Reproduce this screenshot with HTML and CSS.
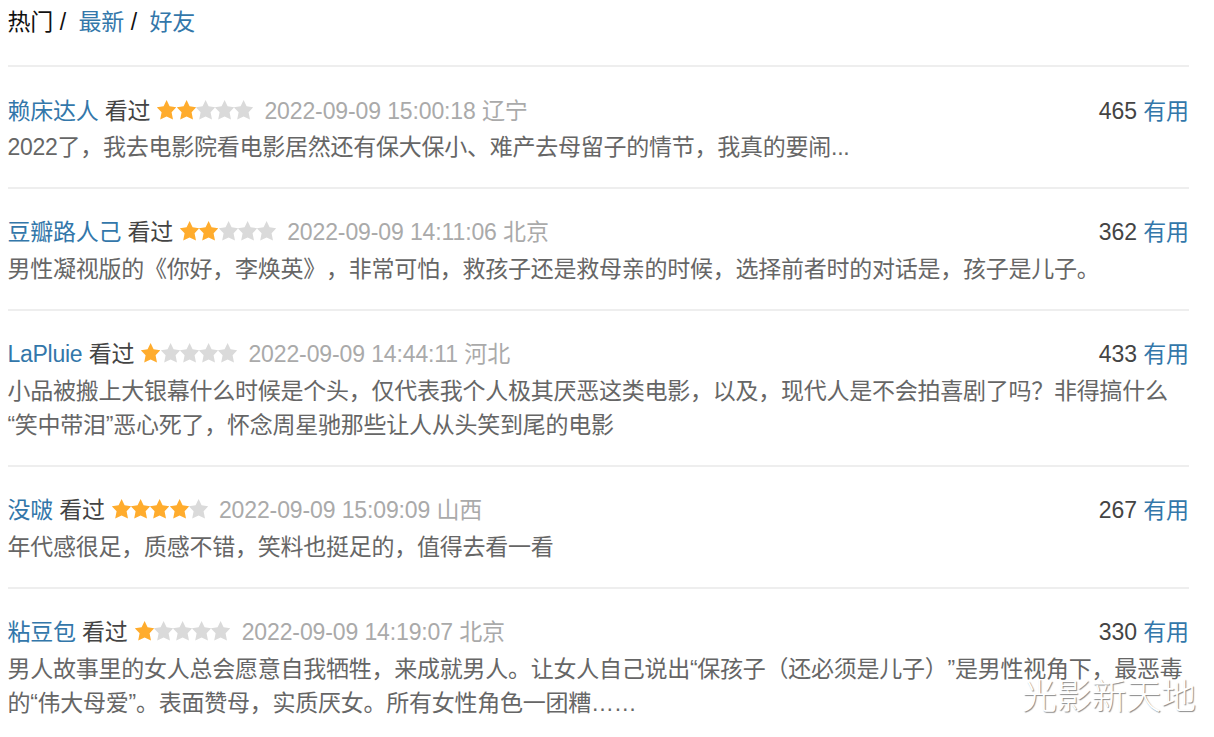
FILE: index.html
```html
<!DOCTYPE html>
<html lang="zh-CN">
	<head>
		<meta charset="utf-8">
		<title>短评</title>
		<link rel="stylesheet" href="styles.css">
	</head>
	<body>
		<svg class="defs" width="0" height="0">
			<symbol id="star" viewBox="0 0 19 20">
				<path d="M9.5 0 L12.5 6.3 L19.2 7.3 L14.5 12.2 L15.9 19.6 L9.5 16.4 L3.1 19.6 L4.5 12.2 L-0.2 7.3 L6.5 6.3 Z"/>
			</symbol>
		</svg>
		<div class="tabs">
			<span class="on">热门</span><i>/</i><a>最新</a><i>/</i><a>好友</a>
		</div>
		<ul class="comments">
			<li>
				<div class="info">
					<a>赖床达人</a><span class="seen">看过</span>
					<span class="stars"><svg class="full"><use href="#star"/></svg><svg class="full"><use href="#star"/></svg><svg><use href="#star"/></svg><svg><use href="#star"/></svg><svg><use href="#star"/></svg></span>
					<span class="time">2022-09-09 15:00:18 辽宁</span>
					<span class="vote">465 <a>有用</a></span>
				</div>
				<p>2022了，我去电影院看电影居然还有保大保小、难产去母留子的情节，我真的要闹...</p>
			</li>
			<li>
				<div class="info">
					<a>豆瓣路人己</a><span class="seen">看过</span>
					<span class="stars"><svg class="full"><use href="#star"/></svg><svg class="full"><use href="#star"/></svg><svg><use href="#star"/></svg><svg><use href="#star"/></svg><svg><use href="#star"/></svg></span>
					<span class="time">2022-09-09 14:11:06 北京</span>
					<span class="vote">362 <a>有用</a></span>
				</div>
				<p>男性凝视版的《你好，李焕英》，非常可怕，救孩子还是救母亲的时候，选择前者时的对话是，孩子是儿子。</p>
			</li>
			<li>
				<div class="info">
					<a>LaPluie</a><span class="seen">看过</span>
					<span class="stars"><svg class="full"><use href="#star"/></svg><svg><use href="#star"/></svg><svg><use href="#star"/></svg><svg><use href="#star"/></svg><svg><use href="#star"/></svg></span>
					<span class="time">2022-09-09 14:44:11 河北</span>
					<span class="vote">433 <a>有用</a></span>
				</div>
				<p>小品被搬上大银幕什么时候是个头，仅代表我个人极其厌恶这类电影，以及，现代人是不会拍喜剧了吗？非得搞什么<br>“笑中带泪”恶心死了，怀念周星驰那些让人从头笑到尾的电影</p>
			</li>
			<li>
				<div class="info">
					<a>没啵</a><span class="seen">看过</span>
					<span class="stars"><svg class="full"><use href="#star"/></svg><svg class="full"><use href="#star"/></svg><svg class="full"><use href="#star"/></svg><svg class="full"><use href="#star"/></svg><svg><use href="#star"/></svg></span>
					<span class="time">2022-09-09 15:09:09 山西</span>
					<span class="vote">267 <a>有用</a></span>
				</div>
				<p>年代感很足，质感不错，笑料也挺足的，值得去看一看</p>
			</li>
			<li>
				<div class="info">
					<a>粘豆包</a><span class="seen">看过</span>
					<span class="stars"><svg class="full"><use href="#star"/></svg><svg><use href="#star"/></svg><svg><use href="#star"/></svg><svg><use href="#star"/></svg><svg><use href="#star"/></svg></span>
					<span class="time">2022-09-09 14:19:07 北京</span>
					<span class="vote">330 <a>有用</a></span>
				</div>
				<p>男人故事里的女人总会愿意自我牺牲，来成就男人。让女人自己说出“保孩子（还必须是儿子）”是男性视角下，最恶毒<br>的“伟大母爱”。表面赞母，实质厌女。所有女性角色一团糟……</p>
			</li>
		</ul>
		<div class="watermark">光影新天地</div>
	</body>
</html>
```

FILE: styles.css
```css
*{
	margin:0;
	padding:0;
	box-sizing:border-box;
}
body{
	width:1214px;
	height:737px;
	padding:0 25px 0 8px;
	overflow:hidden;
	background:#fff;
	color:#444;
	font-family:"Liberation Sans","Noto Sans CJK SC",sans-serif;
	font-size:23px;
	letter-spacing:-0.25px;
	text-spacing-trim:space-all;
}
a{
	color:#37a;
}
.defs{
	position:absolute;
}
.tabs{
	display:flex;
	height:65px;
	margin-left:-0.6px;
	padding-top:5px;
	line-height:34px;
}
.tabs .on{
	color:#111;
}
.tabs i{
	margin:0 12.6px 0 6.8px;
	color:#111;
	font-style:normal;
}
.comments{
	list-style:none;
}
.comments li{
	min-height:122px;
	padding:25px 0 23px;
	border-top:2px solid #eee;
	white-space:nowrap;
}
.info{
	display:flex;
	height:36px;
	margin-left:-0.6px;
	line-height:36px;
}
.comments li:first-child .info{
	padding-top:1px;
}
.seen{
	margin-left:6.4px;
}
.stars{
	display:flex;
	margin:7px 0 0 7.2px;
}
.stars svg{
	width:19.2px;
	height:20px;
	fill:#dadada;
}
.stars .full{
	fill:#ffac2d;
}
.time{
	margin-left:11px;
	color:#aaa;
	letter-spacing:-0.12px;
}
.vote{
	margin-left:auto;
	letter-spacing:-0.1px;
}
.comments p{
	margin-left:-0.6px;
	padding-top:2px;
	color:#666;
	line-height:34px;
}
.watermark{
	position:absolute;
	left:1022px;
	top:672px;
	color:#fff;
	font-size:35px;
	font-weight:300;
	line-height:50px;
	text-shadow:1px 1px 1px #888;
}
```
